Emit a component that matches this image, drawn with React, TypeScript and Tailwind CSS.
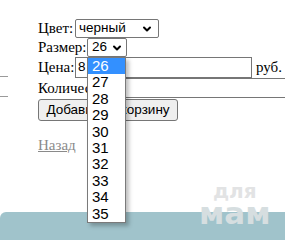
import { ChevronDown } from "lucide-react";

const sizes = ["26", "27", "28", "29", "30", "31", "32", "33", "34", "35"];

function Chevron() {
  return <ChevronDown className="h-[12px] w-[12px] text-black" strokeWidth={4} />;
}

export default function App() {
  return (
    <div className="relative h-[240px] w-[285px] overflow-hidden bg-white font-['Liberation_Serif',serif] text-[15px] text-black">
      <div className="flex flex-col pl-[38px] pt-[19px]">
        <div className="flex h-[19px] items-center">
          <span className="w-[37px]">Цвет:</span>
          <div className="flex h-[19px] w-[84px] items-center justify-between rounded-[2px] border border-[#767676] pl-[3px] pr-[5px] font-['Liberation_Sans',sans-serif] text-[13.5px]">
            <span>черный</span>
            <Chevron />
          </div>
        </div>
        <div className="flex h-[19px] items-center">
          <span className="w-[49px]">Размер:</span>
          <div className="flex h-[19px] w-[40px] items-center justify-between rounded-[2px] border border-[#767676] pl-[4px] pr-[3px] font-['Liberation_Sans',sans-serif] text-[13.5px]">
            <span>26</span>
            <Chevron />
          </div>
        </div>
        <div className="flex h-[21px] items-center">
          <span className="w-[37px]">Цена:</span>
          <div className="flex h-[21px] w-[177px] items-center border border-[#767676] pl-[2px] font-['Liberation_Sans',sans-serif] text-[13.5px]">
            8
          </div>
          <span className="ml-[4px]">руб.</span>
        </div>
        <div className="flex h-[20px] items-center">
          <span className="w-[83px] shrink-0">Количество:</span>
          <div className="h-[20px] w-[200px] shrink-0 border border-[#767676]" />
        </div>
        <div className="mt-[1px] flex">
          <button className="h-[22px] w-[140px] rounded-[3px] border border-[#767676] bg-[#efefef] font-['Liberation_Sans',sans-serif] text-[13.5px] text-black">
            Добавить в корзину
          </button>
        </div>
        <a className="mt-[13px] w-fit text-[#8a8a8a] underline">Назад</a>
      </div>

      <div className="mt-[55px] h-[28px] rounded-tl-[6px] bg-[#a0c3cb]" />

      <div className="absolute left-[199px] top-[182px] flex flex-col items-center font-['DejaVu_Sans',sans-serif] font-bold leading-none">
        <span className="text-[20px] leading-[18px] text-[#e2e3e4]">для</span>
        <span className="text-[31px] leading-[26px] tracking-[0px] text-[#d6dee0]">мам</span>
      </div>

      <div className="absolute left-0 top-[76px] h-px w-[8px] bg-[#9a9a9a]" />
      <div className="absolute left-0 top-[96px] h-px w-[8px] bg-[#9a9a9a]" />

      <div className="absolute left-[87px] top-[57px] w-[39px] border border-[#7a7a7a] bg-white font-['Liberation_Sans',sans-serif] text-[15px] shadow-[3px_3px_4px_rgba(0,0,0,0.25)]">
        {sizes.map((s, i) => (
          <div
            key={s}
            className={
              i === 0
                ? "h-[16.4px] bg-[#3390ff] pl-[4px] leading-[16.4px] text-white"
                : "h-[16.4px] pl-[4px] leading-[16.4px] text-black"
            }
          >
            {s}
          </div>
        ))}
      </div>
    </div>
  );
}
